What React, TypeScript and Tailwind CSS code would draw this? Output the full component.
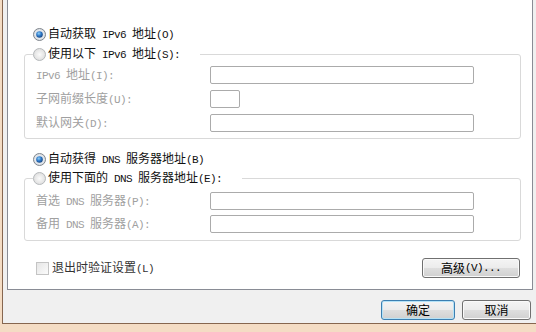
import type { FC, ReactNode } from 'react';

const L: FC<{ children: ReactNode }> = ({ children }) => (
    <span className="font-['Liberation_Mono',monospace] text-[11px] tracking-[-0.6px]">{children}</span>
);

const Radio: FC<{ checked?: boolean }> = ({ checked }) => (
    <svg width="13" height="13" viewBox="0 0 13 13" className="shrink-0">
        <defs>
            <radialGradient id="rOn" cx="50%" cy="50%" r="55%">
                <stop offset="0" stopColor="#ffffff" />
                <stop offset="1" stopColor="#d3d9e0" />
            </radialGradient>
            <radialGradient id="rOff" cx="50%" cy="50%" r="55%">
                <stop offset="0" stopColor="#fbfbfb" />
                <stop offset="1" stopColor="#dcdcdc" />
            </radialGradient>
            <radialGradient id="rDot" cx="40%" cy="35%" r="65%">
                <stop offset="0" stopColor="#8fd0f7" />
                <stop offset="0.55" stopColor="#2d78c8" />
                <stop offset="1" stopColor="#1a4a86" />
            </radialGradient>
        </defs>
        <circle cx="6.5" cy="6.5" r="6" fill={checked ? 'url(#rOn)' : 'url(#rOff)'} stroke={checked ? '#7f858c' : '#b5b8bb'} />
        {checked && <circle cx="6.5" cy="6.5" r="3.3" fill="url(#rDot)" />}
    </svg>
);

const Field: FC<{ label: ReactNode; short?: boolean }> = ({ label, short }) => (
    <div className="flex h-[18px] items-center">
        <div className="w-[174px] text-[#a0a0a0]">{label}</div>
        <div className={`h-[18px] rounded-[2px] border border-[#ababab] bg-white ${short ? 'w-[30px]' : 'w-[264px]'}`} />
    </div>
);

const WinButton: FC<{ children: ReactNode; width: string; primary?: boolean }> = ({ children, width, primary }) => (
    <button
        type="button"
        className={`${width} flex h-[20px] items-center justify-center rounded-[3px] border bg-[linear-gradient(to_bottom,#f4f4f4_0%,#ececec_48%,#dedede_52%,#d0d0d0_100%)] text-[12px] leading-[16px] text-black ${
            primary ? 'border-[#3c7fb1] shadow-[inset_0_0_0_1px_#b4e2f7]' : 'border-[#707070] shadow-[inset_0_0_0_1px_#fafafa]'
        }`}
    >
        {children}
    </button>
);

const App: FC = () => {
    return (
        <div className="h-[332px] w-[536px] overflow-hidden bg-[#f4dcc4] font-['Noto_Sans_CJK_SC',sans-serif] text-[12px] leading-[16px] text-[#111]">
            <div className="ml-[2px] flex h-[324px] w-[534px] flex-col border-b border-l border-[#86664f] bg-[#f0f0f0]">
                {/* tab page */}
                <div className="ml-[4px] flex h-[290px] w-[526px] flex-col border-x border-b border-[#898c95] bg-white pl-[16px] pt-[26px]">
                    <div className="flex h-[16px] items-center gap-[2px] pl-[9px]">
                        <Radio checked />
                        <span>
                            自动获取<L> IPv6 </L>地址<L>(O)</L>
                        </span>
                    </div>

                    <fieldset className="mt-[4px] w-[497px] rounded-[3px] border border-[#d9d9d9] pb-[6px] pl-[11px]">
                        <legend className="-ml-[3px] pr-[20px]">
                            <div className="flex h-[16px] items-center gap-[2px]">
                                <Radio />
                                <span>
                                    使用以下<L> IPv6 </L>地址<L>(S):</L>
                                </span>
                            </div>
                        </legend>
                        <div className="flex flex-col gap-[6px] pt-[4px]">
                            <Field label={<><L>IPv6 </L>地址<L>(I):</L></>} />
                            <Field label={<>子网前缀长度<L>(U):</L></>} short />
                            <Field label={<>默认网关<L>(D):</L></>} />
                        </div>
                    </fieldset>

                    <div className="mt-[12px] flex h-[16px] items-center gap-[2px] pl-[9px]">
                        <Radio checked />
                        <span>
                            自动获得<L> DNS </L>服务器地址<L>(B)</L>
                        </span>
                    </div>

                    <fieldset className="mt-[3px] w-[497px] rounded-[3px] border border-[#d9d9d9] pb-[7px] pl-[11px]">
                        <legend className="-ml-[3px] pr-[20px]">
                            <div className="flex h-[16px] items-center gap-[2px]">
                                <Radio />
                                <span>
                                    使用下面的<L> DNS </L>服务器地址<L>(E):</L>
                                </span>
                            </div>
                        </legend>
                        <div className="flex flex-col gap-[5px] pt-[6px]">
                            <Field label={<>首选<L> DNS </L>服务器<L>(P):</L></>} />
                            <Field label={<>备用<L> DNS </L>服务器<L>(A):</L></>} />
                        </div>
                    </fieldset>

                    <div className="mt-[17px] flex h-[20px] w-[496px] items-center justify-between pl-[12px]">
                        <label className="flex items-center gap-[3px] text-[#333]">
                            <span className="h-[13px] w-[13px] border border-[#c4c4c4] bg-[linear-gradient(135deg,#e6e6e6,#fbfbfb)]" />
                            <span>
                                退出时验证设置<L>(L)</L>
                            </span>
                        </label>
                        <WinButton width="w-[98px]">
                            高级<L>(V)...</L>
                        </WinButton>
                    </div>
                </div>

                {/* dialog buttons */}
                <div className="mt-[10px] flex justify-end gap-[7px] pr-[5px]">
                    <WinButton width="w-[74px]" primary>
                        确定
                    </WinButton>
                    <WinButton width="w-[69px]">取消</WinButton>
                </div>
            </div>
        </div>
    );
};

export default App;
